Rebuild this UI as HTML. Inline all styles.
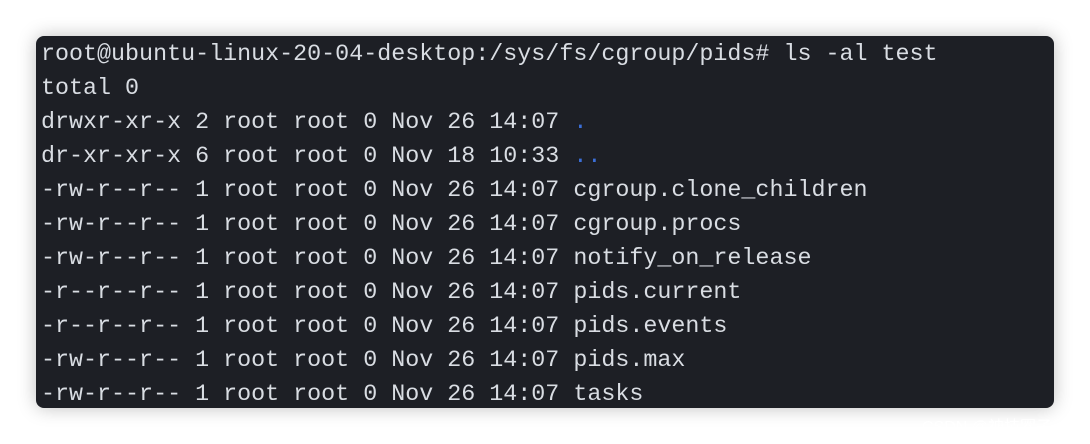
<!DOCTYPE html>
<html><head><meta charset="utf-8"><style>
html,body{margin:0;padding:0;width:1090px;height:444px;background:#fff;overflow:hidden}
.t{position:absolute;left:36px;top:36px;width:1018px;height:372px;background:#1d1f25;border-radius:8px;box-shadow:0 0 18px rgba(0,0,0,0.25);box-sizing:border-box;padding:2px 0 0 5px;font-family:"Liberation Mono",monospace;font-size:23.35px;line-height:34px;color:#d9dde3;white-space:pre}
.b{color:#3b6fd8}
.w{position:absolute;left:922px;top:413px;font-family:"Liberation Sans","Noto Sans CJK SC",sans-serif;font-size:16px;color:rgba(255,255,255,0.85)}
</style></head><body>
<div class="t">root@ubuntu-linux-20-04-desktop:/sys/fs/cgroup/pids# ls -al test
total 0
drwxr-xr-x 2 root root 0 Nov 26 14:07 <span class="b">.</span>
dr-xr-xr-x 6 root root 0 Nov 18 10:33 <span class="b">..</span>
-rw-r--r-- 1 root root 0 Nov 26 14:07 cgroup.clone_children
-rw-r--r-- 1 root root 0 Nov 26 14:07 cgroup.procs
-rw-r--r-- 1 root root 0 Nov 26 14:07 notify_on_release
-r--r--r-- 1 root root 0 Nov 26 14:07 pids.current
-r--r--r-- 1 root root 0 Nov 26 14:07 pids.events
-rw-r--r-- 1 root root 0 Nov 26 14:07 pids.max
-rw-r--r-- 1 root root 0 Nov 26 14:07 tasks</div>
<div class="w">CSDN @神技圈子</div>
</body></html>
